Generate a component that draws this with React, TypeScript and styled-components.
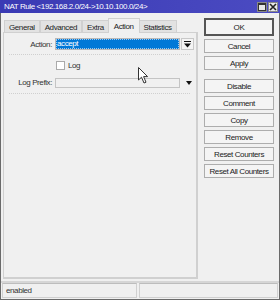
import styled, { createGlobalStyle } from 'styled-components';

const GlobalStyle = createGlobalStyle`
  html, body {
    margin: 0;
    padding: 0;
    background: #f0f0f0;
  }
  body {
    font-family: 'Liberation Sans', Arial, sans-serif;
    font-size: 8px;
    letter-spacing: -0.4px;
    color: #222;
  }
`;

const tabs = ['General', 'Advanced', 'Extra', 'Action', 'Statistics'];
const buttons = [
  { label: 'OK', main: true },
  { label: 'Cancel' },
  { label: 'Apply', after: 6 },
  { label: 'Disable' },
  { label: 'Comment' },
  { label: 'Copy' },
  { label: 'Remove' },
  { label: 'Reset Counters' },
  { label: 'Reset All Counters' },
];

function SelectArrow() {
  return (
    <svg width="7" height="7" viewBox="0 0 7 7">
      <rect x="0" y="0" width="7" height="1" fill="#111" />
      <path d="M0 2.5 L7 2.5 L3.5 6.5 Z" fill="#111" />
    </svg>
  );
}

function Cursor() {
  return (
    <svg width="12" height="18" viewBox="0 0 12 18">
      <path
        d="M0.5 0.5 L0.5 13 L3.5 10.2 L6 16 L8 15.2 L5.6 9.6 L9.6 9.6 Z"
        fill="#fff"
        stroke="#333"
        strokeWidth="1"
        strokeLinejoin="round"
      />
    </svg>
  );
}

export default function App() {
  return (
    <>
      <GlobalStyle />
      <Window>
        <TitleBar>
          <Title>NAT Rule &lt;192.168.2.0/24-&gt;10.10.100.0/24&gt;</Title>
          <TitleButtons>
            <TitleButton>
              <svg width="8" height="8" viewBox="0 0 8 8">
                <rect x="0.5" y="0.5" width="7" height="7" fill="none" stroke="#333" />
                <rect x="0.5" y="0.5" width="7" height="1.5" fill="#333" />
              </svg>
            </TitleButton>
            <TitleButton>
              <svg width="8" height="8" viewBox="0 0 8 8">
                <path d="M1 1 L7 7 M7 1 L1 7" stroke="#222" strokeWidth="1.6" />
              </svg>
            </TitleButton>
          </TitleButtons>
        </TitleBar>

        <Body>
          <LeftSide>
            <TabRow>
              {tabs.map((t) => (
                <Tab key={t} $active={t === 'Action'}>
                  {t}
                </Tab>
              ))}
            </TabRow>
            <Panel>
              <FormRow>
                <Label>Action:</Label>
                <SelectField>
                  <Selected>accept</Selected>
                </SelectField>
                <DropButton>
                  <SelectArrow />
                </DropButton>
              </FormRow>
              <Separator />
              <CheckRow>
                <CheckBox />
                <span>Log</span>
              </CheckRow>
              <FormRow>
                <Label>Log Prefix:</Label>
                <InputField />
                <Triangle />
              </FormRow>
              <Separator />
              <CursorSpot>
                <Cursor />
              </CursorSpot>
            </Panel>
          </LeftSide>

          <ButtonColumn>
            {buttons.map((b) => (
              <Button key={b.label} $main={b.main} $after={b.after}>
                {b.label}
              </Button>
            ))}
          </ButtonColumn>
        </Body>

        <StatusBar>
          <StatusField>enabled</StatusField>
          <StatusField />
        </StatusBar>
      </Window>
    </>
  );
}

const Window = styled.div`
  position: relative;
  width: 280px;
  height: 300px;
  box-sizing: border-box;
  border: 1px solid #6a6a6a;
  border-top: none;
  display: flex;
  flex-direction: column;
  background: #f0f0f0;
`;

const TitleBar = styled.div`
  height: 13px;
  margin: 0 -1px;
  display: flex;
  align-items: center;
  justify-content: space-between;
  padding: 0 2px 0 4px;
  background: linear-gradient(90deg, #3a3ab4, #4b4bc2);
  color: #fff;
`;

const Title = styled.span`
  white-space: nowrap;
`;

const TitleButtons = styled.div`
  display: flex;
  gap: 1px;
`;

const TitleButton = styled.div`
  width: 10px;
  height: 10px;
  display: flex;
  align-items: center;
  justify-content: center;
  background: #e8e8e8;
  border: 1px solid #888;
  box-sizing: border-box;
`;

const Body = styled.div`
  flex: 1;
  display: flex;
  padding: 5px 0 0 2px;
`;

const LeftSide = styled.div`
  width: 195px;
  display: flex;
  flex-direction: column;
`;

const TabRow = styled.div`
  display: flex;
  align-items: flex-end;
  height: 15px;
  padding-left: 1px;
`;

const Tab = styled.div<{ $active?: boolean }>`
  box-sizing: border-box;
  height: ${(p) => (p.$active ? '15px' : '13px')};
  padding: 0 ${(p) => (p.$active ? '5px' : '4px')};
  margin: 0 ${(p) => (p.$active ? '-1px' : '0')};
  display: flex;
  align-items: center;
  border: 1px solid #d0d0d0;
  border-bottom: none;
  background: ${(p) => (p.$active ? '#f0f0f0' : '#e2e2e2')};
  position: relative;
  z-index: ${(p) => (p.$active ? 1 : 0)};
  & + & {
    border-left: ${(p) => (p.$active ? '1px solid #d0d0d0' : 'none')};
  }
`;

const Panel = styled.div`
  position: relative;
  flex: 1;
  margin-top: -1px;
  margin-bottom: 2px;
  border: 1px solid #d0d0d0;
  border-right: 2px solid #d0d0d0;
  border-bottom: 2px solid #d0d0d0;
  padding: 5px 0 0 0;
  display: flex;
  flex-direction: column;
`;

const FormRow = styled.div`
  display: grid;
  grid-template-columns: 48px 125px 11px;
  column-gap: 3px;
  align-items: center;
  height: 11px;
`;

const Label = styled.span`
  text-align: right;
  color: #333;
`;

const SelectField = styled.div`
  height: 10px;
  border: 1px solid #b8b8b8;
  background: #fff;
  display: flex;
  align-items: stretch;
`;

const Selected = styled.div`
  flex: 1;
  background: #0078d7;
  color: #fff;
  line-height: 10px;
  padding-left: 1px;
  outline: 1px dotted #9cc9f0;
  outline-offset: -1px;
`;

const DropButton = styled.div`
  height: 10px;
  margin-left: -2px;
  border: 1px solid #c8c8c8;
  background: #f4f4f4;
  display: flex;
  align-items: center;
  justify-content: center;
`;

const InputField = styled.div`
  height: 8px;
  border: 1px solid #c4c4c4;
  background: #f0f0f0;
`;

const Triangle = styled.div`
  justify-self: center;
  width: 0;
  height: 0;
  border-left: 3.5px solid transparent;
  border-right: 3.5px solid transparent;
  border-top: 4px solid #111;
`;

const Separator = styled.div`
  margin: 5px 6px 6px 5px;
  border-top: 1px dotted #cfcfcf;
`;

const CheckRow = styled.div`
  display: flex;
  align-items: center;
  gap: 3px;
  padding-left: 52px;
  height: 8px;
  margin-bottom: 8px;
  color: #333;
`;

const CheckBox = styled.div`
  width: 7px;
  height: 7px;
  border: 1px solid #aaa;
  background: #fff;
`;

const CursorSpot = styled.div`
  position: absolute;
  left: 134px;
  top: 34px;
`;

const ButtonColumn = styled.div`
  display: flex;
  flex-direction: column;
  padding: 0 0 0 6px;
  gap: 3px;
`;

const Button = styled.div<{ $main?: boolean; $after?: number }>`
  box-sizing: border-box;
  width: 70px;
  height: ${(p) => (p.$main ? '18px' : '14px')};
  margin-bottom: ${(p) => (p.$after ? `${p.$after}px` : '0')};
  display: flex;
  align-items: center;
  justify-content: center;
  border: ${(p) => (p.$main ? '2px solid #555' : '1px solid #adadad')};
  background: #f4f4f4;
  color: #222;
  white-space: nowrap;
`;

const StatusBar = styled.div`
  display: grid;
  grid-template-columns: 135px 1fr;
  gap: 2px;
  padding: 0 1px 1px 1px;
  height: 15px;
  border-top: 2px solid #d6d6d6;
`;

const StatusField = styled.div`
  border: 1px solid #d0d0d0;
  border-top-color: #bdbdbd;
  display: flex;
  align-items: center;
  padding-left: 3px;
  color: #333;
`;
